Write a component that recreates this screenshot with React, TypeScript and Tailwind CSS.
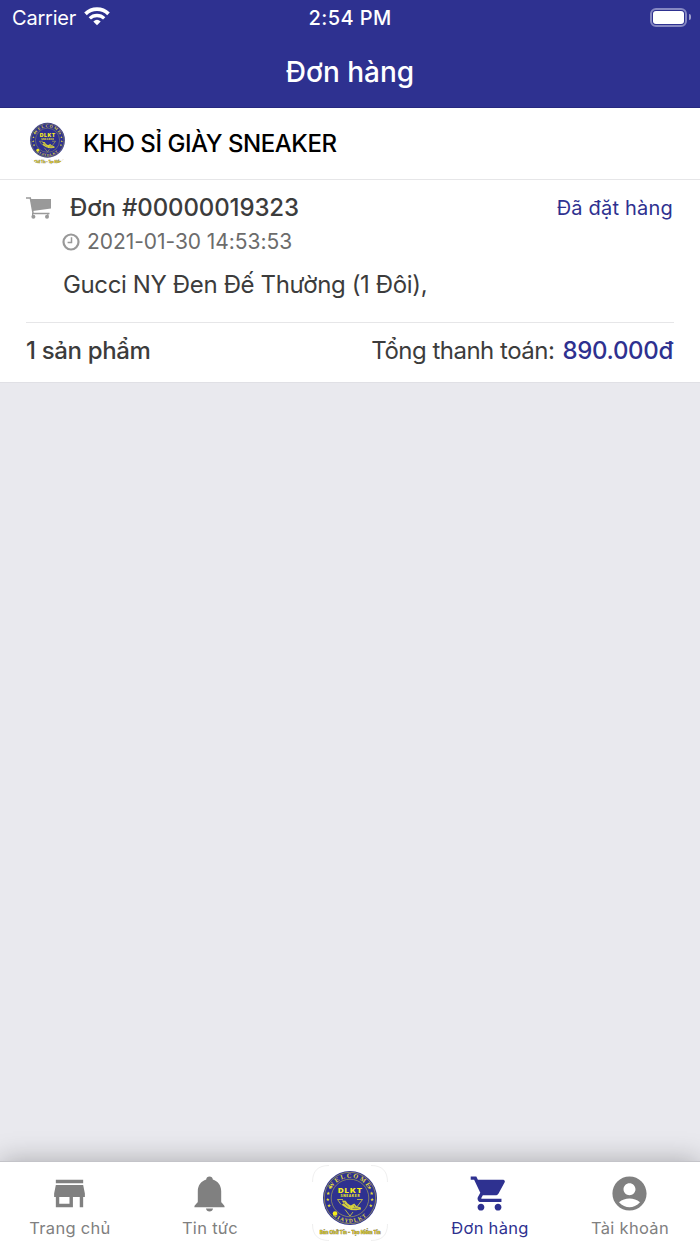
import { useId } from "react";
import type { ReactNode } from "react";
import { MdAccountCircle, MdShoppingCart, MdStore } from "react-icons/md";

type Order = {
  code: string;
  status: string;
  createdAt: string;
  items: string;
  count: string;
  total: string;
};

const ORDER: Order = {
  code: "Đơn #00000019323",
  status: "Đã đặt hàng",
  createdAt: "2021-01-30 14:53:53",
  items: "Gucci NY Đen Đế Thường (1 Đôi),",
  count: "1 sản phẩm",
  total: "890.000đ",
};

export default function App() {
  return (
    <div className="flex h-[1244px] w-[700px] flex-col overflow-hidden bg-[#e9e9ee] font-['Inter','Liberation_Sans',sans-serif]">
      <header className="h-[108px] shrink-0 border-b border-[#27297f] bg-[#2e3190] text-white">
        <StatusBar />
        <h1 className="text-center text-[28px] leading-[72px] font-medium">Đơn hàng</h1>
      </header>

      <ShopRow />
      <OrderCard order={ORDER} />
      <TabBar />
    </div>
  );
}

function StatusBar() {
  return (
    <div className="grid h-9 grid-cols-3 items-center px-3 text-xl leading-9">
      <div className="flex items-center gap-2">
        <span className="tracking-[-0.2px]">Carrier</span>
        <WifiIcon />
      </div>
      <span className="text-center font-medium tracking-[0.4px]">2:54 PM</span>
      <div className="-mr-[3px] flex items-center justify-end gap-0.5 pb-0.5">
        <div className="h-[19px] w-[37px] rounded-md border-2 border-[#8688c2] p-px">
          <div className="h-full rounded-[3px] bg-white" />
        </div>
        <div className="h-1.5 w-0.5 rounded-r-full bg-[#9c9dcb]" />
      </div>
    </div>
  );
}

function ShopRow() {
  return (
    <section className="flex h-[72px] shrink-0 items-center border-b border-[#e6e6e8] bg-white pl-[25px]">
      <div className="flex size-[45px] items-center justify-center overflow-hidden rounded-full">
        <ShopLogo className="size-[49px] shrink-0" />
      </div>
      <h2 className="ml-[13px] text-2xl font-medium tracking-[-0.45px] text-black">
        KHO SỈ GIÀY SNEAKER
      </h2>
    </section>
  );
}

function OrderCard({ order }: { order: Order }) {
  return (
    <section className="h-[203px] shrink-0 border-b border-[#e0e0e5] bg-white px-[26px] text-[#3c3c3c]">
      <div className="flex h-14 items-center justify-between">
        <div className="flex items-center">
          <CartIcon />
          <span className="ml-[19px] text-2xl font-medium tracking-[-0.12px]">
            {order.code}
          </span>
        </div>
        <span className="pr-px text-[20px] tracking-[0.2px] text-[#2e3190]">
          {order.status}
        </span>
      </div>

      <div className="-mt-[7px] flex h-[26px] items-center pl-9 text-[#6c6c6c]">
        <ClockIcon />
        <span className="ml-[7px] text-[21px] tracking-[-0.05px]">{order.createdAt}</span>
      </div>

      <p className="h-[68px] border-b border-[#e6e6e8] pl-[37px] text-2xl leading-[60px] tracking-[-0.37px]">
        {order.items}
      </p>

      <div className="flex h-[55px] items-center justify-between text-2xl">
        <span className="font-medium tracking-[-0.35px]">{order.count}</span>
        <p className="flex gap-2 pr-px">
          <span className="tracking-[-0.5px]">Tổng thanh toán:</span>
          <span className="font-medium tracking-[-0.3px] text-[#2e3190]">{order.total}</span>
        </p>
      </div>
    </section>
  );
}

function TabBar() {
  return (
    <nav className="mt-auto grid h-[83px] shrink-0 grid-cols-5 border-t border-[#c4c4c9] bg-white shadow-[0_0_26px_rgba(0,0,0,0.28)]">
      <Tab label="Trang chủ" icon={<MdStore size={41} />} />
      <Tab label="Tin tức" icon={<BellIcon />} />
      <div className="flex justify-center pt-[3px]">
        <ShopLogo className="size-[76px]" framed />
      </div>
      <Tab label="Đơn hàng" icon={<MdShoppingCart size={41} />} active />
      <Tab label="Tài khoản" icon={<MdAccountCircle size={41} />} />
    </nav>
  );
}

function Tab({
  label,
  icon,
  active = false,
}: {
  label: string;
  icon: ReactNode;
  active?: boolean;
}) {
  return (
    <div
      className={`flex flex-col items-center pt-[10.5px] ${active ? "text-[#2e3190]" : "text-[#808080]"}`}
    >
      <span className="mr-px">{icon}</span>
      <span className="mt-[2px] text-[16.5px] leading-6 tracking-[0.3px]">{label}</span>
    </div>
  );
}

/** Round shop badge with the slogan under it. */
function ShopLogo({ className, framed = false }: { className: string; framed?: boolean }) {
  const id = useId();

  return (
    <svg viewBox="0 0 76 76" className={className} fontFamily="Inter, sans-serif">
      {framed && (
        <path
          d="M.5 17C.5 6 6 .5 17 .5M59 .5c11 0 16.5 5.5 16.5 16.5M75.500 59c0 11-5.500 16.500-16.500 16.500M17 75.500C6 75.500.5 70 .5 59"
          fill="none"
          stroke="#e8e8e8"
          strokeWidth="0.7"
        />
      )}
      <defs>
        <path id={`${id}top`} d="M17.800 35a20.300 20.300 0 1 1 40.400 0" />
        <path id={`${id}bottom`} d="M13.500 33a24.500 24.500 0 0 0 49 0" />
      </defs>
      <circle cx="38" cy="33" r="27" fill="#2e3190" />
      <circle cx="38" cy="33" r="25.7" fill="none" stroke="#b9b64c" strokeWidth="0.6" />
      <circle cx="38" cy="33" r="18.800" fill="none" stroke="#b9b64c" strokeWidth="0.6" />
      <g
        fill="#e2dc3c"
        fontWeight="700"
        textAnchor="middle"
        fontFamily="Liberation Serif, serif"
      >
        <text fontSize="6.4" letterSpacing="1.5">
          <textPath href={`#${id}top`} startOffset="50%">
            WELCOME
          </textPath>
        </text>
        <text fontSize="5.4" letterSpacing="1.2">
          <textPath href={`#${id}bottom`} startOffset="50%">
            GIAYDLKT
          </textPath>
        </text>
      </g>
      <g fill="#f5ee1b" textAnchor="middle">
        <text
          transform="translate(38.5 28) scale(1.15 1)"
          fontSize="6.8"
          fontWeight="900"
          letterSpacing="0.8"
        >
          DLKT
        </text>
        <text x="38.300" y="32" fontSize="3.1" fontWeight="800" letterSpacing="0.7">
          SNEAKER
        </text>
      </g>
      {[-24, -8, 8, 24].map((deg) => (
        <g key={deg} fill="#e2dc3c">
          <Star deg={deg - 4} />
          <Star deg={184 - deg} />
        </g>
      ))}
      <path
        d="M31 34.500h-5.500l3.500 5M45 34.500h5.500l-6.500 8.500M33 44.500l5 6.500 3-4"
        fill="none"
        stroke="#d8d23c"
        strokeWidth="0.8"
      />
      <g fill="#d8d23c">
        <path d="M30 35.500l3.600.3 2 2.800 3.400 2.200-1.200 3.600-3.200-1.200-5-3.400 1.800-1.200z" />
        <path d="M38 41l4.200-2.400 2.400 2.600 4.200 1.400.2 2-5 .6-5.800-.2z" />
      </g>
      <g stroke="#2e3190" strokeWidth="0.5">
        <path d="M31 37.500l5.500 4.500M40.500 43.400l6-.2M33 36.800l-1 2M42 40.400l1 2" />
      </g>
      <circle cx="23" cy="48.500" r="2.300" fill="#f5ee1b" />
      <text
        transform="translate(38.2 68.5) scale(0.86 1)"
        fontSize="5.400"
        fontWeight="600"
        textAnchor="middle"
        fill="#e3d31c"
        stroke="#77745c"
        strokeWidth="0.6"
        paintOrder="stroke"
      >
        Bán Chữ Tín - Tạo Niềm Tin
      </text>
    </svg>
  );
}

function Star({ deg }: { deg: number }) {
  return (
    <path
      d="M0-1.900.5-.6 1.800-.6.8.3 1.100 1.600 0 .8-1.100 1.600-.8.3-1.800-.6-.5-.6z"
      transform={`rotate(${deg} 38 33) translate(60.200 33) rotate(${-deg})`}
    />
  );
}

function WifiIcon() {
  return (
    <svg viewBox="0 0 26 20" className="h-5 w-[26px] -translate-y-px" fill="none" stroke="white">
      <path d="M1.500 6.800a16.500 16.500 0 0 1 23 0" strokeWidth="3.700" />
      <path d="M5.800 11.400a10.400 10.400 0 0 1 14.400 0" strokeWidth="3.300" />
      <path d="M9.300 14.500a5.600 5.600 0 0 1 7.400 0L13 18.300z" fill="white" stroke="none" />
    </svg>
  );
}

/** Solid-basket cart used next to the order number. */
function CartIcon() {
  return (
    <svg viewBox="0 0 25 22" className="h-[22px] w-[25px]" fill="#999">
      <path d="M4.400 2H25v9.500L6.800 14z" />
      <path d="M0 .9h4.300l2.800 15.500H23.500" fill="none" stroke="#999" strokeWidth="1.500" />
      <circle cx="7.400" cy="19.700" r="2" />
      <circle cx="21" cy="19.700" r="2" />
      <path d="M6.600 16v3M21.800 16v3" stroke="#999" strokeWidth="1.200" />
    </svg>
  );
}

function ClockIcon() {
  return (
    <svg viewBox="0 0 18 18" className="size-[18px]" fill="none" stroke="#999">
      <circle cx="9" cy="9" r="7.500" strokeWidth="2.200" />
      <path d="M9.500 4.200v5.300H5.600" strokeWidth="1.500" />
    </svg>
  );
}

function BellIcon() {
  return (
    <svg viewBox="0 0 41 41" className="size-[41px]" fill="currentColor">
      <path d="M20.500 3.600c-1.900 0-3.200 1.300-3.300 3-5 1.500-8.400 5.900-8.400 11.700v10.200c0 1.700-3.400 3.200-3.400 5.300v.4h30.200v-.4c0-2.100-3.400-3.600-3.400-5.300V18.300c0-5.800-3.400-10.200-8.400-11.700-.1-1.700-1.400-3-3.300-3z" />
      <path d="M17 35.600h7c-.2 1.900-1.600 3-3.500 3s-3.300-1.100-3.500-3z" />
    </svg>
  );
}
